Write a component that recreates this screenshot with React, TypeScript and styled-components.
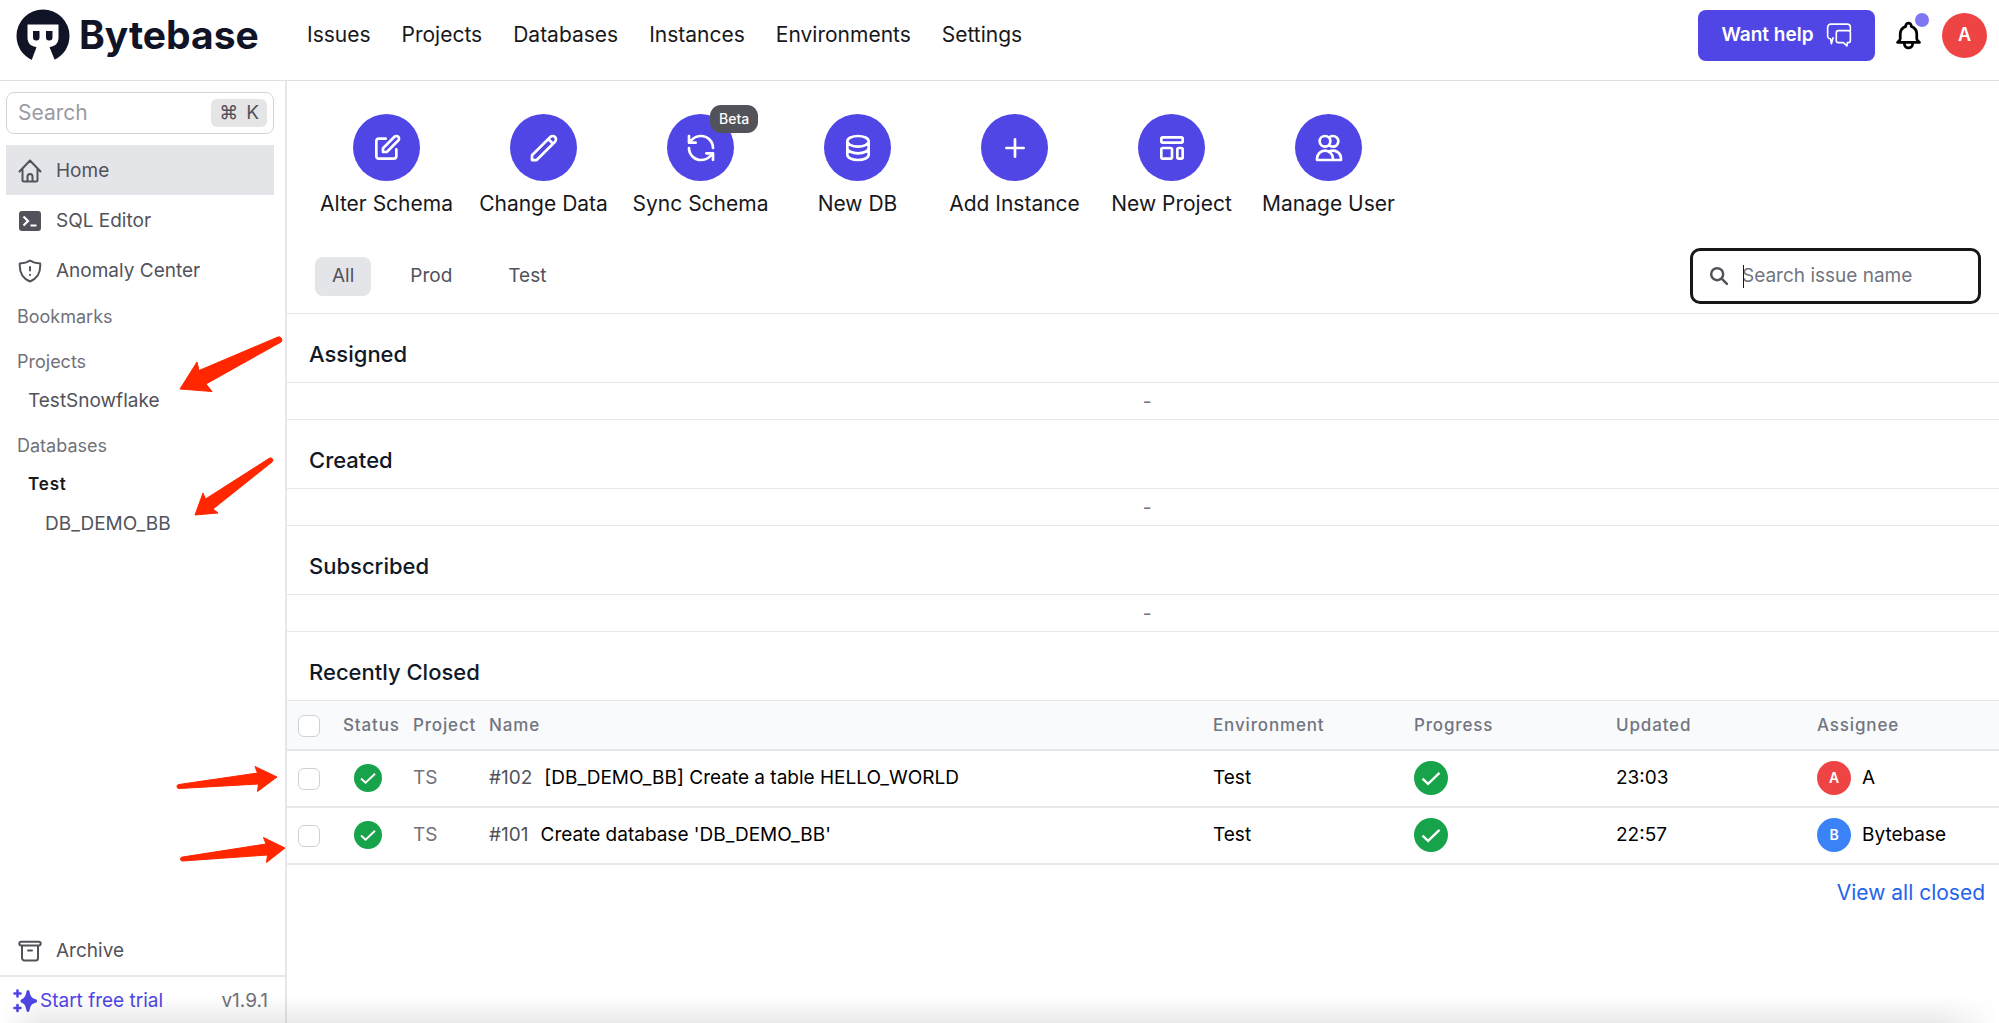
import React from "react";
import styled, { createGlobalStyle } from "styled-components";

const Global = createGlobalStyle`
  *, *::before, *::after { box-sizing: border-box; }
  body { margin: 0; background: #fff; color: #18181b; font-family: Inter, "Liberation Sans", sans-serif; font-size: 19px; line-height: 28px; }
  button, input { font: inherit; color: inherit; }
  a { color: inherit; text-decoration: none; }
  ul, h1, h2, p { margin: 0; padding: 0; list-style: none; }
`;

const Page = styled.div`
  position: relative;
  min-height: 100vh;
  display: flex;
  flex-direction: column;
`;

/* ---------- header ---------- */
const Header = styled.header`
  display: flex;
  align-items: center;
  height: 81px;
  padding: 0 12px 10px 16px;
  border-bottom: 1px solid #e0e0e3;
`;
const Brand = styled.a`
  display: flex;
  align-items: center;
  gap: 9px;
  width: 263px;
  color: #111427;
  font-size: 39px;
  line-height: 48px;
  font-weight: 700;
`;
const Nav = styled.nav`
  display: flex;
  gap: 31px;
  margin-left: 28px;
  font-size: 21px;
`;
const HeaderRight = styled.div`
  display: flex;
  align-items: center;
  margin-left: auto;
`;
const HelpButton = styled.button`
  display: flex;
  align-items: center;
  justify-content: center;
  gap: 12px;
  width: 177px;
  height: 51px;
  border: 0;
  border-radius: 8px;
  background: #4f46e5;
  color: #fff;
  font-weight: 600;
  white-space: nowrap;
`;
const BellButton = styled.button`
  position: relative;
  display: flex;
  margin: 0 17px;
  padding: 0;
  border: 0;
  background: none;
  color: #000;
`;
const Dot = styled.span`
  position: absolute;
  top: -6px;
  right: -4px;
  width: 14px;
  height: 14px;
  border-radius: 50%;
  background: #7f77f1;
`;
const Avatar = styled.span<{ $size: number; $color: string }>`
  display: inline-flex;
  align-items: center;
  justify-content: center;
  flex: none;
  width: ${(p) => p.$size}px;
  height: ${(p) => p.$size}px;
  border-radius: 50%;
  background: ${(p) => p.$color};
  color: #fff;
  font-size: ${(p) => (p.$size > 40 ? 18 : 14)}px;
  font-weight: 600;
`;

/* ---------- sidebar ---------- */
const Body = styled.div`
  display: flex;
  flex: 1;
`;
const Sidebar = styled.aside`
  display: flex;
  flex-direction: column;
  flex: none;
  width: 287px;
  border-right: 2px solid #e5e7eb;
  color: #52525b;
`;
const SidebarTop = styled.div`
  flex: 1;
  padding: 11px 11px 0 6px;
`;
const QuickSearch = styled.label`
  display: flex;
  align-items: center;
  height: 42px;
  margin-bottom: 11px;
  padding: 0 6px 0 11px;
  border: 1px solid #d4d4d8;
  border-radius: 8px;
`;
const QuickInput = styled.input`
  flex: 1;
  min-width: 0;
  padding: 0;
  border: 0;
  outline: 0;
  background: none;
  font-size: 21px;
  &::placeholder { color: #9b9ba3; opacity: 1; }
`;
const Kbd = styled.kbd`
  display: flex;
  gap: 8px;
  height: 28px;
  padding: 0 8px;
  border-radius: 6px;
  background: #e5e5e6;
  font-family: Inter, "DejaVu Sans", sans-serif;
  font-size: 19px;
`;
const SideLink = styled.a<{ $active?: boolean }>`
  display: flex;
  align-items: center;
  gap: 14px;
  height: 50px;
  padding: 1px 12px 0;
  background: ${(p) => (p.$active ? "#e4e5e9" : "transparent")};
`;
const Sections = styled.div`
  padding-top: 1px;
`;
const Heading = styled.h2`
  padding: 7px 11px;
  margin-bottom: 3px;
  font-size: 18px;
  font-weight: 400;
  color: #71717a;
`;
const Tree = styled.ul`
  margin: -5px 0 5px;
`;
const TreeItem = styled.li<{ $depth?: number; $strong?: boolean }>`
  padding: 0 0 0 ${(p) => (p.$depth === 2 ? 39 : 22)}px;
  height: 39px;
  line-height: 39px;
  font-size: ${(p) => (p.$strong ? 17 : 19)}px;
  font-weight: ${(p) => (p.$strong ? 600 : 400)};
  letter-spacing: ${(p) => (p.$strong ? "0.05em" : "normal")};
  color: ${(p) => (p.$strong ? "#18181b" : "inherit")};
`;
const ArchiveBox = styled.div`
  padding: 0 11px 0 6px;
`;
const SidebarFooter = styled.footer`
  display: flex;
  align-items: center;
  justify-content: space-between;
  height: 48px;
  padding: 2px 17px 0 13px;
  border-top: 2px solid #e5e7eb;
`;
const Trial = styled.a`
  display: flex;
  align-items: center;
  gap: 3px;
  color: #4f46e5;
`;
const Version = styled.span`
  color: #71717a;
`;

/* ---------- main ---------- */
const Main = styled.main`
  flex: 1;
  min-width: 0;
`;
const Actions = styled.div`
  display: flex;
  padding: 33px 0 0 21px;
`;
const Action = styled.button`
  display: flex;
  flex-direction: column;
  align-items: center;
  gap: 9px;
  width: 157px;
  padding: 0;
  border: 0;
  background: none;
  font-size: 21px;
  white-space: nowrap;
`;
const Circle = styled.span`
  position: relative;
  display: flex;
  align-items: center;
  justify-content: center;
  width: 67px;
  height: 67px;
  border-radius: 50%;
  background: #4f46e5;
  color: #fff;
`;
const Beta = styled.span`
  position: absolute;
  left: 43px;
  top: -9px;
  height: 28px;
  padding: 0 9px;
  border-radius: 11px;
  background: #52525b;
  font-size: 14px;
  line-height: 28px;
  font-weight: 500;
`;
const FilterBar = styled.div`
  display: flex;
  align-items: center;
  justify-content: space-between;
  margin-top: 30px;
  padding: 0 18px 9px 28px;
  border-bottom: 1px solid #e5e7eb;
`;
const Tabs = styled.div`
  display: flex;
  gap: 22px;
`;
const Tab = styled.button<{ $active?: boolean }>`
  height: 39px;
  padding: 0 17px;
  border: 0;
  border-radius: 8px;
  background: ${(p) => (p.$active ? "#e4e5e9" : "transparent")};
  color: #52525b;
`;
const IssueSearch = styled.label`
  position: relative;
  display: flex;
  align-items: center;
  gap: 13px;
  width: 291px;
  height: 56px;
  padding: 0 16px;
  border: 3px solid #18181b;
  border-radius: 10px;
  color: #52525b;
`;
const IssueInput = styled.input`
  flex: 1;
  min-width: 0;
  padding: 0;
  border: 0;
  outline: 0;
  &::placeholder { color: #71757f; opacity: 1; }
`;
const Caret = styled.span`
  position: absolute;
  left: 50px;
  top: 14px;
  width: 1px;
  height: 23px;
  background: #18181b;
`;
const Title = styled.h2`
  height: 68px;
  padding: 6px 22px 0;
  font-size: 22px;
  line-height: 68px;
  font-weight: 500;
  color: #111827;
`;
const Empty = styled.p`
  height: 38px;
  padding-left: 8px;
  border: solid #e5e7eb;
  border-width: 1px 0;
  line-height: 38px;
  text-align: center;
  color: #71717a;
`;
const Table = styled.table`
  width: 100%;
  border-collapse: collapse;
  table-layout: fixed;
`;
const Th = styled.th`
  height: 49px;
  padding: 1px 0 0 8px;
  border: solid #e5e7eb;
  border-width: 1px 0 2px;
  background: #f9fafb;
  color: #71757f;
  font-size: 17px;
  font-weight: 500;
  letter-spacing: 0.05em;
  text-align: left;
`;
const Td = styled.td<{ $muted?: boolean }>`
  height: 57px;
  padding: 0 0 0 8px;
  border-bottom: 2px solid #e8e9ec;
  color: ${(p) => (p.$muted ? "#71717a" : "#000")};
  white-space: nowrap;
`;
const Inline = styled.span<{ $gap?: number; $pad?: number }>`
  display: flex;
  align-items: center;
  gap: ${(p) => p.$gap ?? 0}px;
  padding-left: ${(p) => p.$pad ?? 0}px;
`;
const IssueNo = styled.span`
  color: #52525b;
`;
const Check = styled.input`
  appearance: none;
  display: block;
  width: 22px;
  height: 22px;
  margin: 2px 0 0 3px;
  border: 1px solid #cfd1d6;
  border-radius: 6px;
  background: #fff;
`;
const More = styled.div`
  padding: 14px;
  text-align: right;
  font-size: 21px;
  color: #2563eb;
`;

/* ---------- overlays ---------- */
const Marks = styled.svg`
  position: absolute;
  left: 0;
  top: 0;
  pointer-events: none;
`;
const Fade = styled.div`
  position: absolute;
  left: 0;
  right: 0;
  bottom: 0;
  height: 28px;
  background: linear-gradient(to bottom, rgba(0, 0, 0, 0), rgba(0, 0, 0, 0.08));
  mask-image: linear-gradient(to right, transparent 0, #000 40px, #000 calc(100% - 60px), transparent 100%);
  pointer-events: none;
`;

type IconProps = { d: string; size?: number; stroke?: number };
const Icon = ({ d, size = 32, stroke = 2 }: IconProps) => (
  <svg width={size} height={size} viewBox="0 0 24 24" fill="none" stroke="currentColor" strokeWidth={stroke} strokeLinecap="round" strokeLinejoin="round" aria-hidden="true">
    <path d={d} />
  </svg>
);

const paths = {
  edit: "M11 5H6a2 2 0 00-2 2v11a2 2 0 002 2h11a2 2 0 002-2v-5m-1.414-9.414a2 2 0 112.828 2.828L11.828 15H9v-2.828l8.586-8.586z",
  pencil: "M15.232 5.232l3.536 3.536m-2.036-5.036a2.5 2.5 0 113.536 3.536L6.5 21.036H3v-3.572L16.732 3.732z",
  sync: "M21 12a9 9 0 0 0-9-9 9.75 9.75 0 0 0-6.74 2.74L3 8M3 3v5h5M3 12a9 9 0 0 0 9 9 9.75 9.75 0 0 0 6.74-2.74L21 16M16 16h5v5",
  database: "M4 7v10c0 2.21 3.582 4 8 4s8-1.79 8-4V7M4 7c0 2.21 3.582 4 8 4s8-1.79 8-4M4 7c0-2.21 3.582-4 8-4s8 1.79 8 4m0 5c0 2.21-3.582 4-8 4s-8-1.79-8-4",
  plus: "M12 5.5v13M18.5 12h-13",
  template: "M4 5a1 1 0 011-1h14a1 1 0 011 1v2a1 1 0 01-1 1H5a1 1 0 01-1-1V5zM4 13a1 1 0 011-1h6a1 1 0 011 1v6a1 1 0 01-1 1H5a1 1 0 01-1-1v-6zM16 13a1 1 0 011-1h2a1 1 0 011 1v6a1 1 0 01-1 1h-2a1 1 0 01-1-1v-6z",
  users: "M12 4.354a4 4 0 110 5.292M15 21H3v-1a6 6 0 0112 0v1zm0 0h6v-1a6 6 0 00-9-5.197M13 7a4 4 0 11-8 0 4 4 0 018 0z",
  bell: "M15 17h5l-1.405-1.405A2.032 2.032 0 0118 14.158V11a6.002 6.002 0 00-4-5.659V5a2 2 0 10-4 0v.341C7.67 6.165 6 8.388 6 11v3.159c0 .538-.214 1.055-.595 1.436L4 17h5m6 0v1a3 3 0 11-6 0v-1m6 0H9",
  archive: "M3.2 6.5a1.6 1.6 0 0 1 0-3.8h17.6a1.6 1.6 0 0 1 0 3.8zM4 6.5v12.5a2.5 2.5 0 0 0 2.5 2.5h11a2.5 2.5 0 0 0 2.5-2.5v-12.5M10 11.5h4",
  home: "M1.5 12.5L12 1.5l10.5 11M4.5 10v11a1.5 1.5 0 0 0 1.5 1.5h12a1.5 1.5 0 0 0 1.5-1.5V10M9.5 22v-4.5a2.5 2.5 0 0 1 5 0V22",
  shield: "M12 1.5C9 3.6 6 4.3 1.8 4.5c-.6 9 2.7 15 10.2 18 7.5-3 10.8-9 10.2-18C18 4.3 15 3.6 12 1.5zM12 8v3.5M12 15.8v.2",
  chat: "M6.5 14.5L5 20l-.8-4.5H4A2.5 2.5 0 0 1 1.5 13V5A3 3 0 0 1 4.500 2h15a3 3 0 0 1 3 3v3M11.5 8h9a2 2 0 0 1 2 2v7a2 2 0 0 1-2 2h-.8l-.4 3-3.3-3h-4.5a2 2 0 0 1-2-2v-7a2 2 0 0 1 2-2z",
  search: "M15.5 15.5L21.5 21.5M17 9.8a7.2 7.2 0 1 1-14.4 0a7.2 7.2 0 0 1 14.4 0z",
};

const LogoMark = () => (
  <svg width="54" height="52" viewBox="0 0 54 52" aria-hidden="true">
    <path fill="#111427" fillRule="evenodd" d="M18 51L20.8 38C14.5 37.5 11.5 34 11.5 28.5V15.5H42.5V28.5C42.5 34 39.5 37.5 33.2 38L38 51C47 47 53.5 38 53.5 27A26.5 26.5 0 1 0 .5 27C.5 38 7 47 16 51Z" />
    <path fill="#fff" d="M20.8 37.5h12.4L39 51.5H15.5z" />
    <path fill="#111427" d="M17 22h6.5v6.5a3 3 0 0 1-3 3h-.5a3 3 0 0 1-3-3zM30 22h6.5v6.5a3 3 0 0 1-3 3H33a3 3 0 0 1-3-3z" />
  </svg>
);

const TerminalIcon = () => (
  <svg width="24" height="24" viewBox="0 0 24 24" fill="none" aria-hidden="true">
    <rect x="1" y="2" width="22" height="20" rx="3" fill="#52525b" />
    <path d="M5.5 7.5L10 12l-4.5 4.5M12.5 16.5h6" stroke="#fff" strokeWidth="2.2" />
  </svg>
);

const SparkleIcon = () => (
  <svg width="24" height="24" viewBox="0 0 24 24" fill="#4f46e5" aria-hidden="true">
    <path d="M15 1c1 0 1.300.8 1.600 2 1 4.500 2 6 6 7.200 1.200.4 1.400 1 1.400 1.800s-.2 1.400-1.400 1.800c-4 1.200-5 2.700-6 7.200-.3 1.200-.6 2-1.600 2s-1.300-.8-1.600-2c-1-4.500-2-6-4.600-7.200-1-.4-1.300-1-1.300-1.800s.3-1.400 1.300-1.800C11.400 9 12.400 7.500 13.400 3c.3-1.200.6-2 1.600-2z" />
    <path d="M4.500 1.500v6M1.500 4.500h6M4.500 16v6M1.500 19h6" stroke="#4f46e5" strokeWidth="2.6" strokeLinecap="round" />
  </svg>
);

const DoneIcon = ({ size }: { size: number }) => (
  <svg width={size} height={size} viewBox="0 0 28 28" fill="none" role="img" aria-label="Done">
    <circle cx="14" cy="14" r="14" fill="#16a34a" />
    <path d="M7 14.5l4.600 4.300L21 9.800" stroke="#fff" strokeWidth="1.900" />
  </svg>
);

const navItems = ["Issues", "Projects", "Databases", "Instances", "Environments", "Settings"];
const actions = [
  { label: "Alter Schema", d: paths.edit },
  { label: "Change Data", d: paths.pencil },
  { label: "Sync Schema", d: paths.sync, beta: true },
  { label: "New DB", d: paths.database },
  { label: "Add Instance", d: paths.plus },
  { label: "New Project", d: paths.template },
  { label: "Manage User", d: paths.users },
];
const issues = [
  { id: 102, name: "[DB_DEMO_BB] Create a table HELLO_WORLD", time: "23:03", who: "A", color: "#ef4444" },
  { id: 101, name: "Create database 'DB_DEMO_BB'", time: "22:57", who: "Bytebase", color: "#3b82f6" },
];

export default function App() {
  return (
    <Page>
      <Global />
      <Header>
        <Brand href="#"><LogoMark />Bytebase</Brand>
        <Nav>{navItems.map((n) => <a href="#" key={n}>{n}</a>)}</Nav>
        <HeaderRight>
          <HelpButton>Want help<Icon d={paths.chat} size={26} stroke={1.5} /></HelpButton>
          <BellButton aria-label="Notifications"><Icon d={paths.bell} size={33} /><Dot /></BellButton>
          <Avatar $size={45} $color="#ef4444">A</Avatar>
        </HeaderRight>
      </Header>
      <Body>
        <Sidebar>
          <SidebarTop>
            <QuickSearch>
              <QuickInput placeholder="Search" aria-label="Search" />
              <Kbd><span>⌘</span><span>K</span></Kbd>
            </QuickSearch>
            <SideLink href="#" $active><Icon d={paths.home} size={24} />Home</SideLink>
            <SideLink href="#"><TerminalIcon />SQL Editor</SideLink>
            <SideLink href="#"><Icon d={paths.shield} size={24} />Anomaly Center</SideLink>
            <Sections>
              <Heading>Bookmarks</Heading>
              <Heading>Projects</Heading>
              <Tree><TreeItem><a href="#">TestSnowflake</a></TreeItem></Tree>
              <Heading>Databases</Heading>
              <Tree>
                <TreeItem $strong>Test</TreeItem>
                <TreeItem $depth={2}><a href="#">DB_DEMO_BB</a></TreeItem>
              </Tree>
            </Sections>
          </SidebarTop>
          <ArchiveBox>
            <SideLink href="#"><Icon d={paths.archive} size={24} />Archive</SideLink>
          </ArchiveBox>
          <SidebarFooter>
            <Trial href="#"><SparkleIcon />Start free trial</Trial>
            <Version>v1.9.1</Version>
          </SidebarFooter>
        </Sidebar>
        <Main>
          <Actions>
            {actions.map((a) => (
              <Action key={a.label}>
                <Circle><Icon d={a.d} />{a.beta && <Beta>Beta</Beta>}</Circle>
                {a.label}
              </Action>
            ))}
          </Actions>
          <FilterBar>
            <Tabs>
              <Tab $active>All</Tab>
              <Tab>Prod</Tab>
              <Tab>Test</Tab>
            </Tabs>
            <IssueSearch>
              <Icon d={paths.search} size={20} stroke={3} />
              <IssueInput placeholder="Search issue name" aria-label="Search issue name" />
              <Caret />
            </IssueSearch>
          </FilterBar>
          {["Assigned", "Created", "Subscribed"].map((t) => (
            <section key={t}>
              <Title>{t}</Title>
              <Empty>-</Empty>
            </section>
          ))}
          <Title>Recently Closed</Title>
          <Table>
            <colgroup>
              <col style={{ width: 48 }} />
              <col style={{ width: 70 }} />
              <col style={{ width: 76 }} />
              <col />
              <col style={{ width: 201 }} />
              <col style={{ width: 202 }} />
              <col style={{ width: 201 }} />
              <col style={{ width: 190 }} />
            </colgroup>
            <thead>
              <tr>
                <Th><Check type="checkbox" aria-label="Select all" /></Th>
                {["Status", "Project", "Name", "Environment", "Progress", "Updated", "Assignee"].map((h) => <Th key={h}>{h}</Th>)}
              </tr>
            </thead>
            <tbody>
              {issues.map((i) => (
                <tr key={i.id}>
                  <Td><Check type="checkbox" aria-label={`Select issue ${i.id}`} /></Td>
                  <Td><Inline $pad={11}><DoneIcon size={28} /></Inline></Td>
                  <Td $muted>TS</Td>
                  <Td><Inline $gap={12}><IssueNo>#{i.id}</IssueNo><span>{i.name}</span></Inline></Td>
                  <Td>Test</Td>
                  <Td><Inline><DoneIcon size={34} /></Inline></Td>
                  <Td>{i.time}</Td>
                  <Td><Inline $gap={11}><Avatar $size={34} $color={i.color}>{i.who[0]}</Avatar>{i.who}</Inline></Td>
                </tr>
              ))}
            </tbody>
          </Table>
          <More><a href="#">View all closed</a></More>
        </Main>
      </Body>
      <Marks width="290" height="880" viewBox="0 0 290 880" fill="#ff2600" stroke="#ff2600" strokeLinejoin="round" aria-hidden="true">
        <path d="M180 389L197 362L199 370.5L278 337A3 3 0 0 1 281 342L206 384L212 391.5Z" />
        <path d="M195 515L203 493L205.5 499L269 458.500A2 2 0 0 1 272 462L213 509L218 513Z" />
        <path d="M277 777L255 766.5L257.5 773L179 784.5A2 2 0 0 0 179 788.5L258.5 784L257.5 791.5Z" />
        <path d="M285 848L263.5 837.5L266 844L182.5 857A2 2 0 0 0 182.5 861L267.5 855L266.5 862.5Z" />
      </Marks>
      <Fade />
    </Page>
  );
}
